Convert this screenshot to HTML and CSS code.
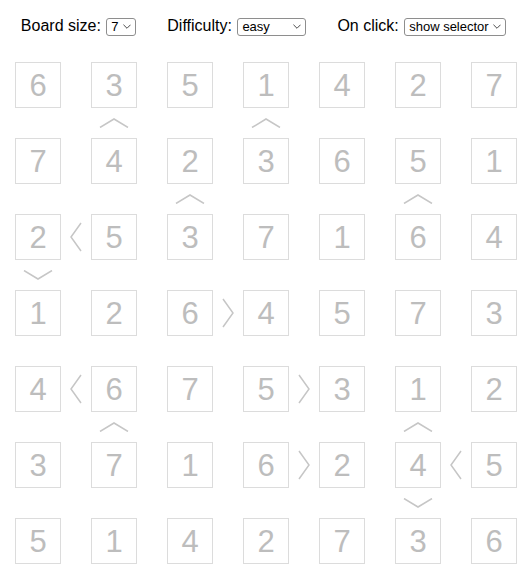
FILE: index.html
```html
<!DOCTYPE html>
<html>
<head>
<meta charset="utf-8">
<link rel="stylesheet" href="styles.css">
</head>
<body>
<div class="controls">
  <label class="ctrl">Board size: <span class="sel w-size"><select><option>7</option></select><svg class="arrow" viewBox="0 0 9 5"><polyline points="0.5,0.5 4.5,4.5 8.5,0.5"/></svg></span></label>
  <label class="ctrl">Difficulty: <span class="sel w-diff"><select><option>easy</option></select><svg class="arrow" viewBox="0 0 9 5"><polyline points="0.5,0.5 4.5,4.5 8.5,0.5"/></svg></span></label>
  <label class="ctrl">On click: <span class="sel w-click"><select><option>show selector</option></select><svg class="arrow" viewBox="0 0 9 5"><polyline points="0.5,0.5 4.5,4.5 8.5,0.5"/></svg></span></label>
</div>

<div class="board">
  <div class="row">
    <div class="cell">6</div><div class="hg"></div><div class="cell">3</div><div class="hg"></div><div class="cell">5</div><div class="hg"></div><div class="cell">1</div><div class="hg"></div><div class="cell">4</div><div class="hg"></div><div class="cell">2</div><div class="hg"></div><div class="cell">7</div>
  </div>
  <div class="vrow">
    <div class="vg"></div><div class="vg"><svg class="up" viewBox="0 0 30 10"><polyline points="1,9.5 15,1 29,9.5"/></svg></div><div class="vg"></div><div class="vg"><svg class="up" viewBox="0 0 30 10"><polyline points="1,9.5 15,1 29,9.5"/></svg></div><div class="vg"></div><div class="vg"></div><div class="vg"></div>
  </div>
  <div class="row">
    <div class="cell">7</div><div class="hg"></div><div class="cell">4</div><div class="hg"></div><div class="cell">2</div><div class="hg"></div><div class="cell">3</div><div class="hg"></div><div class="cell">6</div><div class="hg"></div><div class="cell">5</div><div class="hg"></div><div class="cell">1</div>
  </div>
  <div class="vrow">
    <div class="vg"></div><div class="vg"></div><div class="vg"><svg class="up" viewBox="0 0 30 10"><polyline points="1,9.5 15,1 29,9.5"/></svg></div><div class="vg"></div><div class="vg"></div><div class="vg"><svg class="up" viewBox="0 0 30 10"><polyline points="1,9.5 15,1 29,9.5"/></svg></div><div class="vg"></div>
  </div>
  <div class="row">
    <div class="cell">2</div><div class="hg"><svg class="side" viewBox="0 0 12 30"><polyline points="11,1 1,15 11,29"/></svg></div><div class="cell">5</div><div class="hg"></div><div class="cell">3</div><div class="hg"></div><div class="cell">7</div><div class="hg"></div><div class="cell">1</div><div class="hg"></div><div class="cell">6</div><div class="hg"></div><div class="cell">4</div>
  </div>
  <div class="vrow">
    <div class="vg"><svg class="up" viewBox="0 0 30 10"><polyline points="1,0.5 15,9 29,0.5"/></svg></div><div class="vg"></div><div class="vg"></div><div class="vg"></div><div class="vg"></div><div class="vg"></div><div class="vg"></div>
  </div>
  <div class="row">
    <div class="cell">1</div><div class="hg"></div><div class="cell">2</div><div class="hg"></div><div class="cell">6</div><div class="hg"><svg class="side" viewBox="0 0 12 30"><polyline points="1,1 11,15 1,29"/></svg></div><div class="cell">4</div><div class="hg"></div><div class="cell">5</div><div class="hg"></div><div class="cell">7</div><div class="hg"></div><div class="cell">3</div>
  </div>
  <div class="vrow">
    <div class="vg"></div><div class="vg"></div><div class="vg"></div><div class="vg"></div><div class="vg"></div><div class="vg"></div><div class="vg"></div>
  </div>
  <div class="row">
    <div class="cell">4</div><div class="hg"><svg class="side" viewBox="0 0 12 30"><polyline points="11,1 1,15 11,29"/></svg></div><div class="cell">6</div><div class="hg"></div><div class="cell">7</div><div class="hg"></div><div class="cell">5</div><div class="hg"><svg class="side" viewBox="0 0 12 30"><polyline points="1,1 11,15 1,29"/></svg></div><div class="cell">3</div><div class="hg"></div><div class="cell">1</div><div class="hg"></div><div class="cell">2</div>
  </div>
  <div class="vrow">
    <div class="vg"></div><div class="vg"><svg class="up" viewBox="0 0 30 10"><polyline points="1,9.5 15,1 29,9.5"/></svg></div><div class="vg"></div><div class="vg"></div><div class="vg"></div><div class="vg"><svg class="up" viewBox="0 0 30 10"><polyline points="1,9.5 15,1 29,9.5"/></svg></div><div class="vg"></div>
  </div>
  <div class="row">
    <div class="cell">3</div><div class="hg"></div><div class="cell">7</div><div class="hg"></div><div class="cell">1</div><div class="hg"></div><div class="cell">6</div><div class="hg"><svg class="side" viewBox="0 0 12 30"><polyline points="1,1 11,15 1,29"/></svg></div><div class="cell">2</div><div class="hg"></div><div class="cell">4</div><div class="hg"><svg class="side" viewBox="0 0 12 30"><polyline points="11,1 1,15 11,29"/></svg></div><div class="cell">5</div>
  </div>
  <div class="vrow">
    <div class="vg"></div><div class="vg"></div><div class="vg"></div><div class="vg"></div><div class="vg"></div><div class="vg"><svg class="up" viewBox="0 0 30 10"><polyline points="1,0.5 15,9 29,0.5"/></svg></div><div class="vg"></div>
  </div>
  <div class="row">
    <div class="cell">5</div><div class="hg"></div><div class="cell">1</div><div class="hg"></div><div class="cell">4</div><div class="hg"></div><div class="cell">2</div><div class="hg"></div><div class="cell">7</div><div class="hg"></div><div class="cell">3</div><div class="hg"></div><div class="cell">6</div>
  </div>
</div>
</body>
</html>
```

FILE: styles.css
```css
html, body {
  margin: 0;
  padding: 0;
  background: #fff;
}
body {
  font-family: "Liberation Sans", Arial, sans-serif;
  color: #000;
}
.controls {
  display: flex;
  justify-content: center;
  align-items: center;
  gap: 31px;
  padding-top: 17px;
  height: 18px;
  font-size: 16px;
}
.ctrl {
  display: flex;
  align-items: center;
  white-space: pre;
}
.sel {
  position: relative;
  display: inline-block;
  height: 18px;
  margin-left: 1px;
}
.sel select {
  appearance: none;
  -webkit-appearance: none;
  box-sizing: border-box;
  height: 18px;
  width: 100%;
  margin: 0;
  padding: 0 0 0 4px;
  border: 1px solid #8e8e8e;
  border-radius: 3px;
  background: #fff;
  font-family: "Liberation Sans", Arial, sans-serif;
  font-size: 13px;
  line-height: 16px;
  color: #000;
}
.w-size { width: 30px; }
.w-diff { width: 69px; }
.w-click { width: 102px; }
.arrow {
  position: absolute;
  right: 5px;
  top: 7px;
  width: 8px;
  height: 5px;
  fill: none;
  stroke: #333;
  stroke-width: 1;
}
.board {
  margin-top: 27px;
  padding-left: 15px;
  display: flex;
  flex-direction: column;
}
.row {
  display: flex;
  height: 46px;
}
.cell {
  box-sizing: border-box;
  width: 46px;
  height: 46px;
  border: 1px solid #dcdcdc;
  display: flex;
  align-items: center;
  justify-content: center;
  font-size: 31px;
  color: #bdbdbd;
  line-height: 1;
}
.hg {
  width: 30px;
  height: 46px;
  display: flex;
  align-items: center;
  justify-content: center;
}
.vrow {
  display: flex;
  gap: 30px;
  height: 30px;
}
.vg {
  width: 46px;
  height: 30px;
  display: flex;
  align-items: center;
  justify-content: center;
}
.up {
  width: 30px;
  height: 10px;
  fill: none;
  stroke: #c6c6c6;
  stroke-width: 1.5;
}
.side {
  width: 12px;
  height: 30px;
  fill: none;
  stroke: #c6c6c6;
  stroke-width: 1.5;
}
```
